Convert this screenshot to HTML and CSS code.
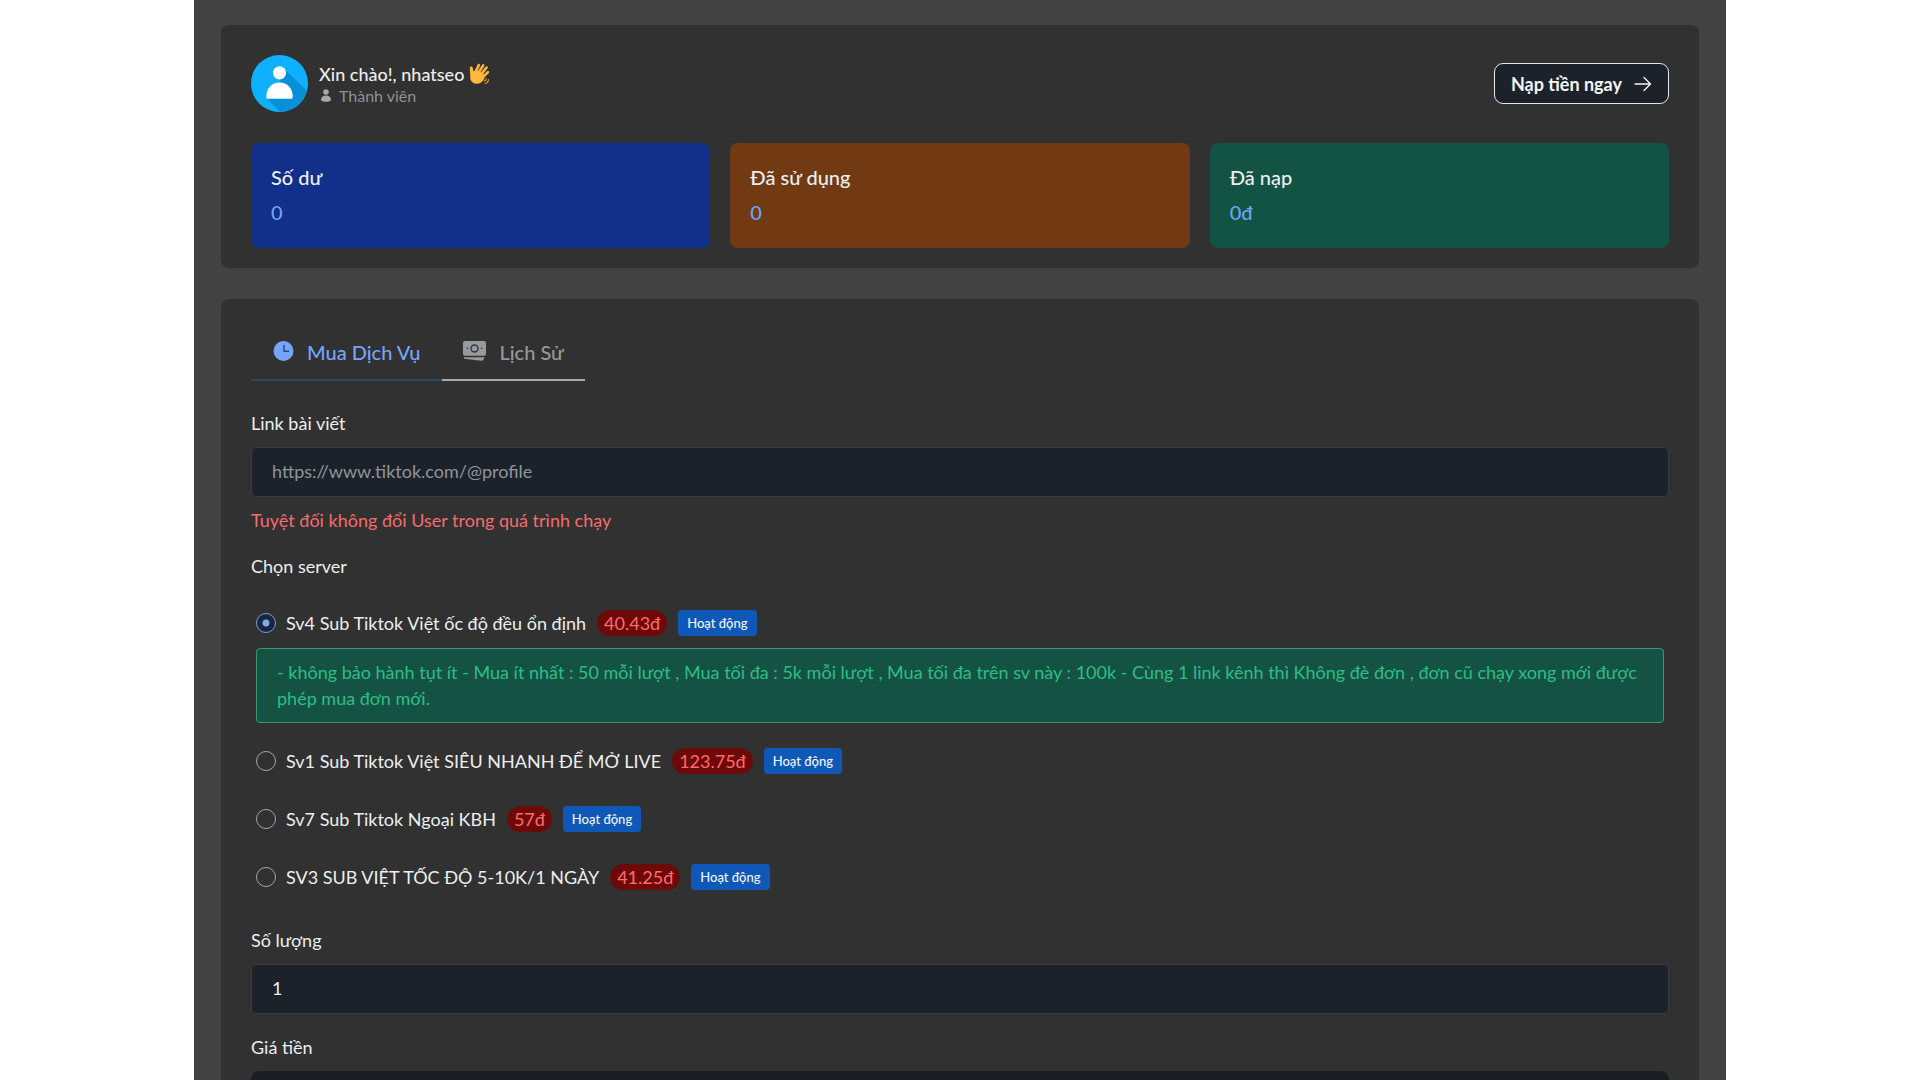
FILE: index.html
```html
<!DOCTYPE html>
<html lang="vi">
<head>
<meta charset="utf-8">
<meta name="viewport" content="width=device-width, initial-scale=1">
<title>Mua Dịch Vụ</title>
<link rel="stylesheet" href="styles.css">
</head>
<body>
<main class="page">
  <section class="panel summary">
    <header class="profile">
      <svg class="avatar" viewBox="0 0 56 56" aria-hidden="true">
        <defs><clipPath id="disc"><circle cx="28" cy="28" r="28"/></clipPath></defs>
        <g clip-path="url(#disc)">
          <path fill="#0fb0ff" d="M0 0h56v56H0z"/>
          <path fill="#0690d8" d="M32 13l30 29v24H38L16 43l12-17z"/>
          <circle cx="28" cy="17.500" r="6.500" fill="#fff"/>
          <path fill="#fff" d="M15 41c0-8.500 5.500-14 13-14s13 5.500 13 14c0 1.500-.8 2-2 2H17c-1.200 0-2-.5-2-2z"/>
        </g>
      </svg>
      <div class="who">
        <p class="greeting">Xin chào!, nhatseo
          <svg class="wave" viewBox="0 0 22 22" aria-hidden="true">
            <path fill="#ffb93d" d="M2.500 11C2 8.500 1.500 6 2 4.300c.6-1.200 2.300-.9 2.700.5l.8 3.700z"/>
            <path stroke="#ffb93d" stroke-width="2.500" stroke-linecap="round" d="M7 10l3.800-8M10 10.500l5.200-8.200M12 12.500l6.600-8M14 15l6-5.800"/>
            <path fill="#ffb93d" d="M2.200 9.500l3.300-1.200 3.400-1.600 7.200 4.500c1.500 3-.2 6.700-3.500 8.600-4.500 2.400-9.200.4-10.300-3.800z"/>
            <path stroke="#d9942b" stroke-width=".7" d="M8.700 8.500l3-5M11.500 10l4-6M13.800 11.800l4.200-4.500"/>
            <path stroke="#d9942b" stroke-width="1.200" stroke-linecap="round" fill="none" d="M18.300 15.500c0 1.300-.8 2.200-2 2.500M20.500 16.500c0 2-1.500 3.600-3.500 4"/>
          </svg>
        </p>
        <p class="rank">
          <svg class="rank-icon" viewBox="0 0 10 13" aria-hidden="true"><circle cx="5" cy="3" r="2.800" fill="currentColor"/><path fill="currentColor" d="M0 10.500C0 8.200 2 6.500 5 6.500s5 1.700 5 4c0 1.500-2 2.300-5 2.300s-5-.8-5-2.300z"/></svg>
          Thành viên
        </p>
      </div>
      <button type="button" class="topup">Nạp tiền ngay
        <svg class="arrow" viewBox="0 0 18 16" aria-hidden="true"><path d="M1 8h15.500M10 1.500L16.500 8 10 14.500" fill="none" stroke="currentColor" stroke-width="1.300" stroke-linecap="round" stroke-linejoin="round"/></svg>
      </button>
    </header>
    <div class="stats">
      <div class="stat stat-blue"><p class="stat-name">Số dư</p><p class="stat-value">0</p></div>
      <div class="stat stat-brown"><p class="stat-name">Đã sử dụng</p><p class="stat-value">0</p></div>
      <div class="stat stat-green"><p class="stat-name">Đã nạp</p><p class="stat-value">0đ</p></div>
    </div>
  </section>

  <section class="panel order">
    <nav class="tabs">
      <a class="tab tab-active" href="#buy" aria-current="page">
        <svg class="tab-icon clock" viewBox="0 0 20 20" aria-hidden="true"><circle cx="10" cy="10" r="10" fill="currentColor"/><path d="M10.500 4v6.300h5" fill="none" stroke="#2a4a85" stroke-width="1.500"/></svg>
        Mua Dịch Vụ
      </a>
      <a class="tab" href="#history">
        <svg class="tab-icon cash" viewBox="0 0 23 20" aria-hidden="true"><path fill="currentColor" d="M2 0h19q2 0 2 2v11q0 1.800-2 1.800H2q-2 0-2-1.800V2q0-2 2-2zM1 16.200h20.500l-1 2.300q-.6 1.300-2 1.200L1 17.800z"/><circle cx="11.500" cy="7.500" r="3.500" fill="none" stroke="#35383b" stroke-width="1.400"/><path fill="#35383b" d="M3.800 6.700h1.400v1.400H3.800zM17.800 6.700h1.400v1.400h-1.400z"/></svg>
        Lịch Sử
      </a>
    </nav>
    <form class="form">
      <div class="field">
        <label for="link">Link bài viết</label>
        <input class="control" id="link" type="text" placeholder="https://www.tiktok.com/@profile">
        <p class="warning">Tuyệt đối không đổi User trong quá trình chạy</p>
      </div>
      <fieldset class="servers">
        <legend>Chọn server</legend>
        <ul class="options">
          <li>
            <div class="option">
              <input type="radio" name="server" id="sv4" checked>
              <label for="sv4">Sv4 Sub Tiktok Việt ốc độ đều ổn định</label>
              <span class="price">40.43đ</span><span class="status">Hoạt động</span>
            </div>
            <p class="note">- không bảo hành tụt ít - Mua ít nhất : 50 mỗi lượt , Mua tối đa : 5k mỗi lượt , Mua tối đa trên sv này : 100k - Cùng 1 link kênh thì Không đè đơn , đơn cũ chạy xong mới được phép mua đơn mới.</p>
          </li>
          <li>
            <div class="option">
              <input type="radio" name="server" id="sv1">
              <label for="sv1">Sv1 Sub Tiktok Việt SIÊU NHANH ĐỂ MỞ LIVE</label>
              <span class="price">123.75đ</span><span class="status">Hoạt động</span>
            </div>
          </li>
          <li>
            <div class="option">
              <input type="radio" name="server" id="sv7">
              <label for="sv7">Sv7 Sub Tiktok Ngoại KBH</label>
              <span class="price">57đ</span><span class="status">Hoạt động</span>
            </div>
          </li>
          <li>
            <div class="option">
              <input type="radio" name="server" id="sv3">
              <label for="sv3">SV3 SUB VIỆT TỐC ĐỘ 5-10K/1 NGÀY</label>
              <span class="price">41.25đ</span><span class="status">Hoạt động</span>
            </div>
          </li>
        </ul>
      </fieldset>
      <div class="field">
        <label for="amount">Số lượng</label>
        <input class="control" id="amount" type="text" inputmode="numeric" value="1">
      </div>
      <div class="field">
        <label for="cost">Giá tiền</label>
        <input class="control control-total" id="cost" type="text" readonly>
      </div>
    </form>
  </section>
</main>
</body>
</html>
```
FILE: styles.css
```css
* {
  box-sizing: border-box;
}

body {
  margin: 0;
  background: #fff;
  color: #eceef0;
  font: 400 18px/26px Lato, "Noto Sans", sans-serif;
}

p,
ul {
  margin: 0;
  padding: 0;
}

.page {
  display: flex;
  flex-direction: column;
  gap: 31px;
  max-width: 1532px;
  min-height: 100vh;
  margin: 0 auto;
  padding: 25px 27px;
  background: #424242;
}

.panel {
  padding: 30px;
  border-radius: 8px;
  background: #313131;
}

.summary {
  padding-bottom: 20px;
}

/* Profile header */
.profile {
  display: flex;
  align-items: center;
  margin-bottom: 31px;
}

.avatar {
  width: 57px;
  height: 57px;
  margin-right: 11px;
}

.who {
  flex: 1;
  padding-top: 2px;
}

.greeting,
.rank {
  display: flex;
  align-items: center;
  line-height: 22px;
}

.greeting {
  gap: 4px;
  font-weight: 500;
}

.wave {
  width: 22px;
  height: 22px;
  fill: none;
}

.rank {
  gap: 8px;
  padding-left: 2px;
  color: #8d9196;
  font-size: 16px;
}

.rank-icon {
  width: 10px;
  height: 13px;
  color: #a6a8ac;
}

.topup {
  display: flex;
  align-items: center;
  gap: 12px;
  height: 41px;
  padding: 0 16px;
  border: 1px solid #e4e6e8;
  border-radius: 9px;
  background: #1d222a;
  color: #f4f5f6;
  font: 700 18px/26px Lato, "Noto Sans", sans-serif;
}

.arrow {
  width: 18px;
  height: 16px;
}

.stats {
  display: grid;
  grid-template-columns: repeat(3, 1fr);
  gap: 20px;
}

.stat {
  display: flex;
  flex-direction: column;
  gap: 9px;
  padding: 21px 20px 23px;
  border-radius: 8px;
  font-size: 20px;
}

.stat-name {
  font-weight: 500;
}

.stat-value {
  color: #6ea3f4;
  font-weight: 500;
}

.stat-blue {
  background: #122f8a;
}

.stat-brown {
  background: #713a13;
}

.stat-green {
  background: #135344;
}

/* Tabs */
.tabs {
  display: flex;
  margin-bottom: 29px;
}

.tab {
  display: flex;
  align-items: center;
  gap: 13px;
  height: 52px;
  padding: 0 21px 4px;
  border-bottom: 2px solid #a9abad;
  color: #96999d;
  font-size: 20px;
  font-weight: 500;
  text-decoration: none;
}

.tab-active {
  padding: 0 22px 4px;
  border-color: #29496a;
  color: #75a5fb;
}

.tab-icon {
  height: 20px;
  margin-bottom: 2px;
}

.clock {
  width: 21px;
}

.cash {
  width: 23px;
}

/* Order form */
.form {
  display: flex;
  flex-direction: column;
  gap: 20px;
}

.field {
  display: flex;
  flex-direction: column;
}

.field label {
  margin-bottom: 11px;
}

.control {
  width: 100%;
  height: 50px;
  padding: 0 20px 2px;
  border: 1px solid #373d43;
  border-radius: 5px;
  background: #1d222a;
  color: #eceef0;
  font: inherit;
}

.control::placeholder {
  color: #8d959c;
  opacity: 1;
}

.control-total {
  border-color: #1a1d21;
  border-radius: 8px;
  background: #1a1d21;
}

.warning {
  margin-top: 10px;
  color: #f56c6c;
}

.servers {
  min-width: 0;
  margin: 0 0 16px;
  padding: 0;
  border: 0;
}

.servers legend {
  padding: 0;
}

.options {
  display: flex;
  flex-direction: column;
  gap: 30px;
  margin-top: 30px;
  padding: 0 5px;
  list-style: none;
}

.option {
  display: flex;
  align-items: center;
  min-height: 28px;
}

.option input {
  width: 20px;
  height: 20px;
  margin: 0 10px 0 0;
  border: 1px solid #a4a6a8;
  border-radius: 50%;
  appearance: none;
}

.option input:checked {
  border-color: #6f9df0;
  background: radial-gradient(circle, #79adff 3px, #1d2636 4px);
}

.price {
  margin: 0 11px;
  padding: 0 7px;
  border-radius: 13px;
  background: #6d0909;
  color: #ff6b6b;
}

.status {
  padding: 0 9px;
  border-radius: 4px;
  background: #0f58b8;
  color: #f0f4fa;
  font-size: 13px;
  font-weight: 500;
}

.note {
  margin: 11px 0 -6px;
  padding: 10px 20px 11px;
  border: 1px solid #3b9676;
  border-radius: 4px;
  background: #145344;
  color: #2ebd85;
}
```
